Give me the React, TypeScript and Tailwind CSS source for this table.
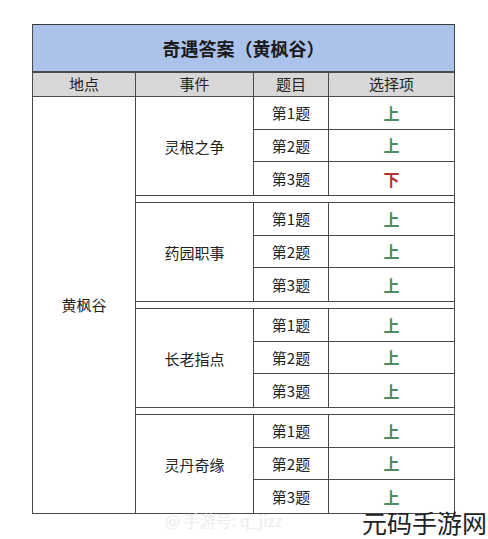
import React from "react"

const font = { fontFamily: '"Noto Sans CJK SC", "Noto Sans", sans-serif' }

interface Group {
  event: string
  answers: string[]
}

const groups: Group[] = [
  { event: "灵根之争", answers: ["上", "上", "下"] },
  { event: "药园职事", answers: ["上", "上", "上"] },
  { event: "长老指点", answers: ["上", "上", "上"] },
  { event: "灵丹奇缘", answers: ["上", "上", "上"] },
]

function EventGroup({ group, first, last }: { group: Group; first: boolean; last: boolean }) {
  const edge = first ? "border-b h-[99px]" : last ? "border-t h-[99px]" : "border-y h-[100px]"
  return (
    <div className={`grid grid-cols-[118px_75px_1fr] grid-rows-3 border-[#4a4a4a] leading-none ${edge}`}>
      <div className="row-span-3 flex items-center justify-center border-r border-[#4a4a4a] text-[15px] text-[#222]">
        {group.event}
      </div>
      {group.answers.map((a, i) => (
        <React.Fragment key={i}>
          <div
            className={`flex items-center justify-center border-r border-[#4a4a4a] text-[15px] text-[#222] ${
              i < 2 ? "border-b" : ""
            }`}
          >
            第{i + 1}题
          </div>
          <div
            className={`flex items-center justify-center border-[#4a4a4a] text-[16px] font-bold ${
              i < 2 ? "border-b" : ""
            } ${a === "下" ? "text-[#b3302f]" : "text-[#4d8c5e]"}`}
          >
            {a}
          </div>
        </React.Fragment>
      ))}
    </div>
  )
}

export default function App() {
  return (
    <div className="relative w-[488px] h-[539px] bg-white overflow-hidden" style={font}>
      <div className="pt-[24px] pl-[32px]">
        <div className="w-[423px] border-x border-[#4a4a4a]">
          {/* Title */}
          <div className="h-[47px] border-t border-[#3a3a3a] bg-[#abc2ea] flex items-center justify-center text-[18px] font-bold text-[#1a1a1a]">
            奇遇答案（黄枫谷）
          </div>

          {/* Header */}
          <div className="h-[25px] border-t-2 border-[#4a4a4a] bg-[#d7d7d7] grid grid-cols-[103px_118px_75px_1fr] text-[15px] text-[#222]">
            <div className="flex items-center justify-center border-r border-[#4a4a4a]">地点</div>
            <div className="flex items-center justify-center border-r border-[#4a4a4a]">事件</div>
            <div className="flex items-center justify-center border-r border-[#4a4a4a]">题目</div>
            <div className="flex items-center justify-center">选择项</div>
          </div>

          {/* Body */}
          <div className="flex border-y border-[#4a4a4a]">
            <div className="w-[103px] shrink-0 flex items-center justify-center border-r border-[#4a4a4a] text-[15px] text-[#222]">
              黄枫谷
            </div>
            <div className="flex-1 flex flex-col gap-[6px]">
              {groups.map((g, i) => (
                <EventGroup key={g.event} group={g} first={i === 0} last={i === groups.length - 1} />
              ))}
            </div>
          </div>
        </div>
      </div>

      {/* Watermarks */}
      <div className="absolute left-[165px] top-[512px] text-[16px] leading-none text-[#ececec]">@ 手游号: q_jizz</div>
      <div className="absolute left-[362px] top-[510px] text-[25px] leading-none text-[#222]">元码手游网</div>
    </div>
  )
}
